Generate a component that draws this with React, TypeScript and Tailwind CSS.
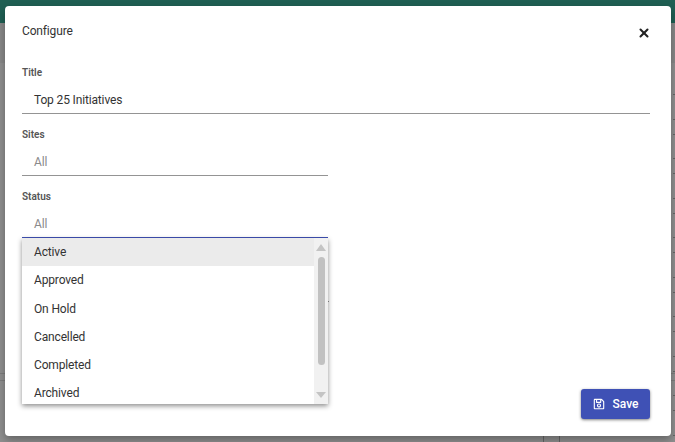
import { X } from 'lucide-react';
import { FaRegSave } from 'react-icons/fa';

const statuses = ['Active', 'Approved', 'On Hold', 'Cancelled', 'Completed', 'Archived'];
const ticks = Array.from({ length: 19 }, (_, i) => i);

function Field({ label, value, muted, focused, wide }: { label: string; value: string; muted?: boolean; focused?: boolean; wide?: boolean }) {
  return (
    <div className={wide ? 'w-full' : 'w-[306px]'}>
      <p className="text-[10px] leading-[14px] font-semibold text-[#555]">{label}</p>
      <div className={`h-[34px] pl-3 pb-[6px] flex items-end border-b ${focused ? 'border-[#3f51b5]' : 'border-[#949494]'}`}>
        <span className={`text-xs tracking-[-0.15px] leading-[14px] ${muted ? 'text-[#8a8a8a]' : 'text-[#333]'}`}>{value}</span>
      </div>
    </div>
  );
}

function StatusMenu() {
  return (
    <div className="absolute left-[17px] top-[232px] w-[306px] h-[166px] bg-white shadow-[0_2px_5px_rgba(0,0,0,0.45)] flex overflow-hidden">
      <ul className="flex-1">
        {statuses.map((s, i) => (
          <li key={s} className={`h-[28.25px] pl-3 flex items-center text-xs tracking-[-0.15px] text-[#333] ${i === 0 ? 'bg-[#ebebeb]' : ''}`}>
            {s}
          </li>
        ))}
      </ul>
      {/* scrollbar */}
      <div className="w-[14px] bg-[#f1f1f1] flex flex-col items-center">
        <svg width="10" height="7" viewBox="0 0 10 7" className="mt-[6px] shrink-0">
          <path d="M5 0 L10 7 H0 Z" fill="#c4c4c4" />
        </svg>
        <div className="w-[7px] h-[108px] mt-[6px] rounded-full bg-[#c1c1c1] shrink-0" />
        <svg width="10" height="6" viewBox="0 0 10 6" className="mt-[27px] shrink-0">
          <path d="M0 0 H10 L5 6 Z" fill="#c4c4c4" />
        </svg>
      </div>
    </div>
  );
}

export default function App() {
  return (
    <div className="relative w-[675px] h-[442px] overflow-hidden bg-[#8f8f8f] font-['Roboto',sans-serif]">
      <div className="h-[23px] bg-[#1f5f53]" />
      <div className="h-[40px] bg-[#888888]" />
      <div className="mt-[310px] h-[8px] border-y border-[#7d7d7d]" />

      {/* page behind the overlay */}
      <div className="absolute right-0 top-[80px] flex flex-col items-end">
        {ticks.map((t) => (
          <div key={t} className="w-[2px] h-px bg-[#666] even:mt-[23.5px] first:mt-0 odd:mt-[14px]" />
        ))}
      </div>
      <div className="absolute left-[543px] top-[436px] h-[6px] w-[17px] border-x border-[#666]" />

      {/* dialog */}
      <div className="absolute left-[5px] top-[6px] w-[666px] h-[430px] bg-white rounded-[4px] shadow-[0_4px_8px_rgba(0,0,0,0.3)] pl-[17px] pr-[21px] pt-[17px]">
        <div className="flex items-center justify-between h-[16px]">
          <h2 className="text-xs tracking-[-0.15px] text-[#333]">Configure</h2>
          <X className="w-[14px] h-[14px] mt-[3px] -mr-[1px] text-[#222]" strokeWidth={3.5} />
        </div>
        <div className="mt-[27px] flex flex-col gap-[14px]">
          <Field label="Title" value="Top 25 Initiatives" wide />
          <Field label="Sites" value="All" muted />
          <Field label="Status" value="All" muted focused />
          <div className="h-[50px] w-[307px] border-b border-[#949494]" />
        </div>
        <StatusMenu />
        <button className="absolute right-[21px] bottom-[17px] w-[69px] h-[30px] rounded-[3px] bg-[#3f51b5] text-white text-xs font-medium flex items-center justify-center gap-2 shadow-[0_1px_3px_rgba(0,0,0,0.5)]">
          <FaRegSave className="w-3 h-3" />
          Save
        </button>
      </div>
    </div>
  );
}
